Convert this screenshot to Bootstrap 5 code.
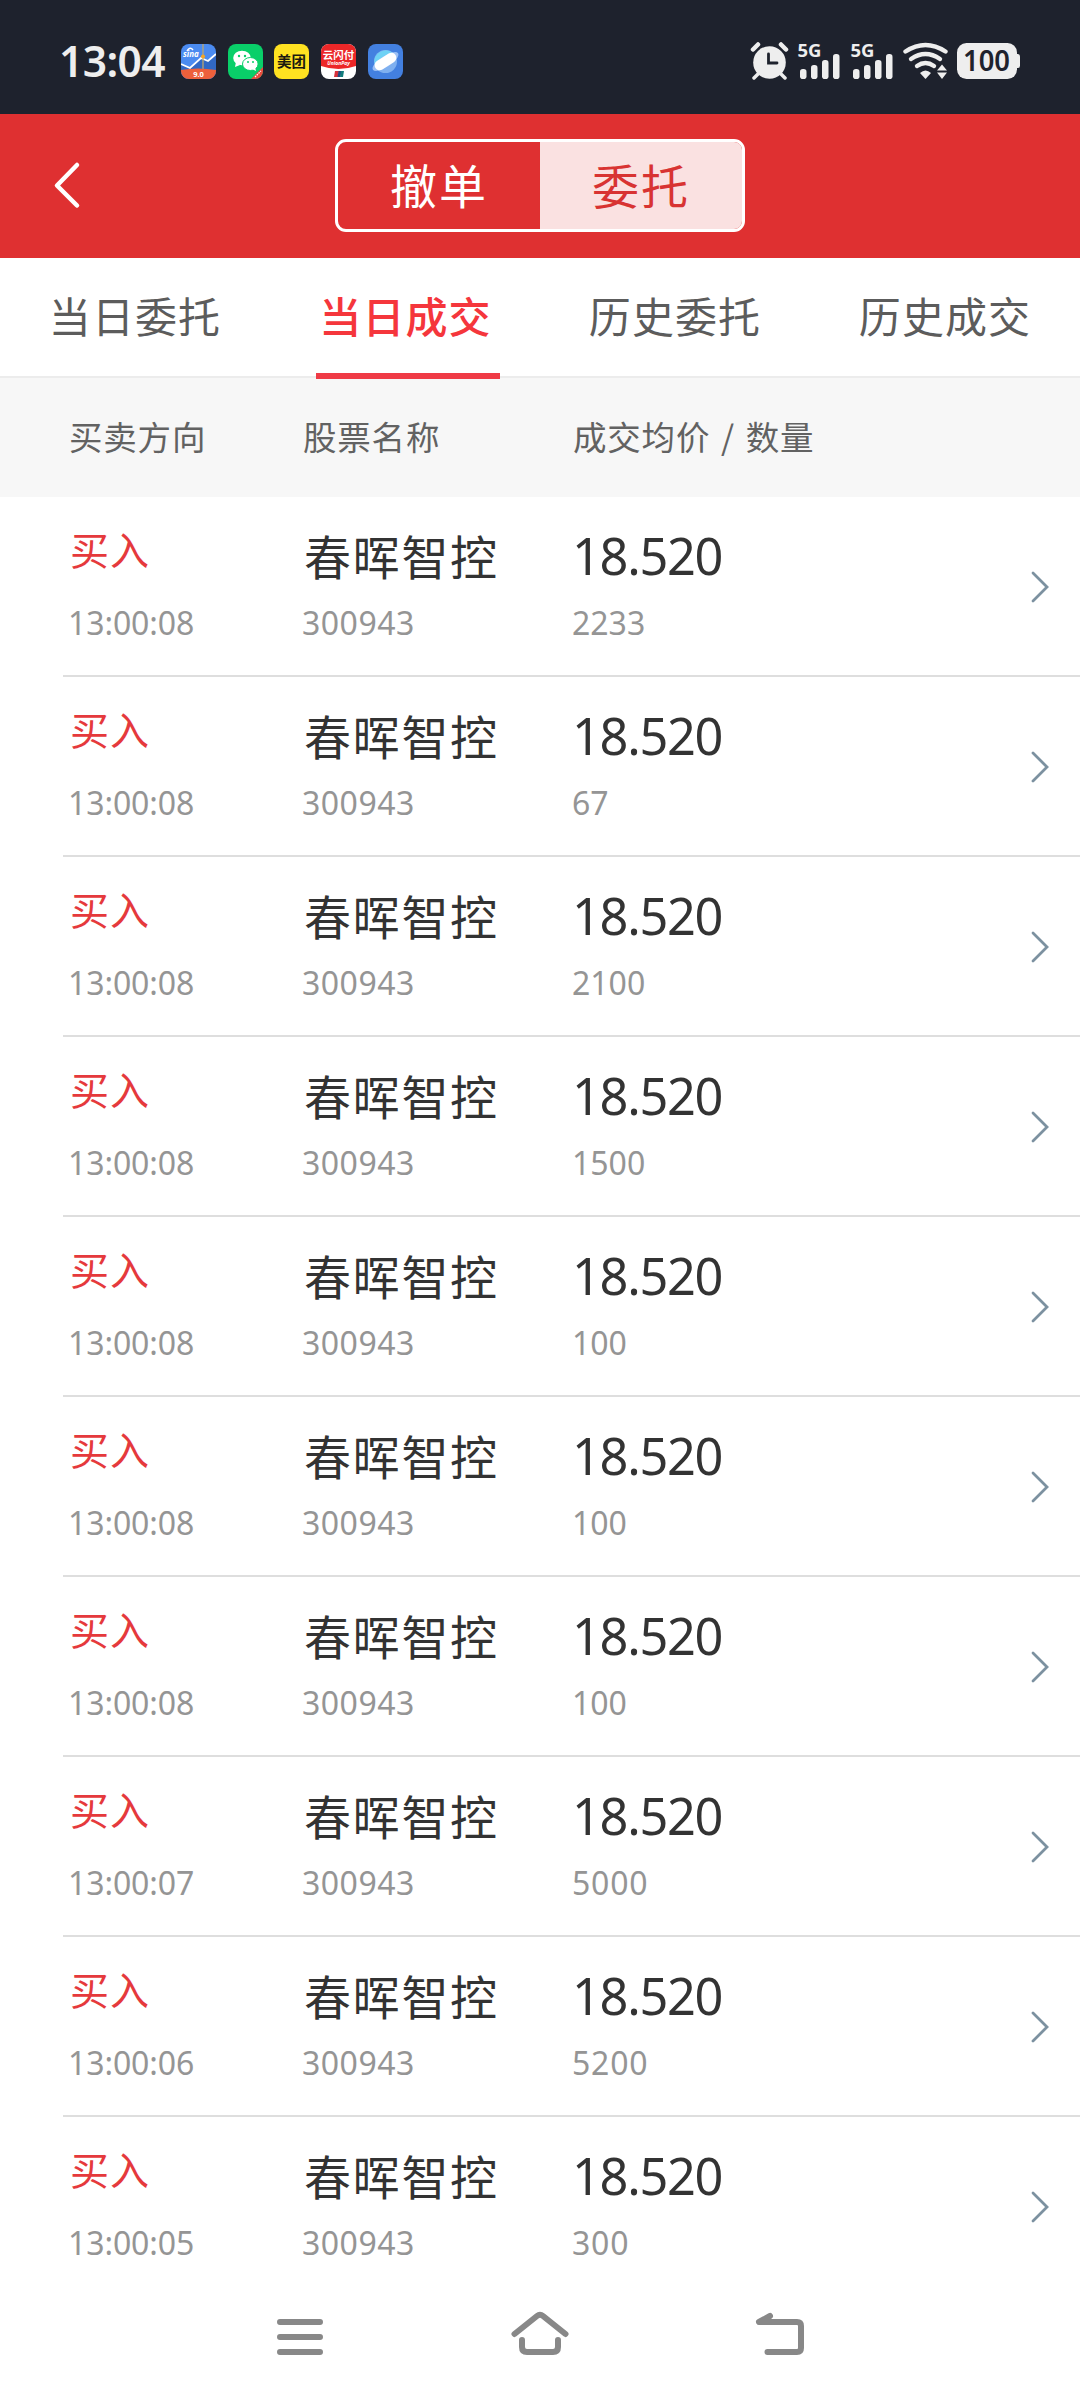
<!DOCTYPE html>
<html lang="zh-CN">
<head>
<meta charset="utf-8">
<meta name="viewport" content="width=device-width, initial-scale=1">
<title>当日成交</title>
<link href="https://cdn.jsdelivr.net/npm/bootstrap@5.3.0/dist/css/bootstrap.min.css" rel="stylesheet">
<style>
body{width:1080px;height:2400px;overflow:hidden;background:#fff;color:#333;font-family:"Noto Sans","Noto Sans CJK SC",sans-serif;line-height:1}
.cjk,.tab-item,.seg-item,.list-head,.side,.stock{font-family:"Noto Sans CJK SC",sans-serif}
svg{display:block;flex:none}
.status-bar{height:114px;background:#1e222d;padding:8px 60px 0 59px}
.clock{color:#eee;font-size:42.5px;font-weight:600;width:122px;letter-spacing:-.6px;line-height:48px}
.apps{gap:11.7px}
.title-bar{height:144px;background:#df3031}
.title-bar .back{width:335px;padding-left:52px}
.seg{width:410px;height:93px;border:3px solid #fff;border-radius:11px;overflow:hidden;margin-top:-1px}
.seg-item{width:50%;font-size:47px;letter-spacing:2px;color:#fff;padding-bottom:5px}
.seg-item.on{background:#fae1e1;color:#d83332}
.tabs-row{height:120px;border-bottom:2px solid #ececec}
.tab-item{height:121px;font-size:42px;letter-spacing:1.1px;color:#5c5c5c}
.tab-item span{height:115px;line-height:113px;display:block;width:184px;text-align:center}
.tab-item.on{color:#f5363c;font-weight:500;padding-left:5px}
.tab-item.on span{border-bottom:6px solid #ef3b46;height:121px;text-indent:-4px}
.list-head{height:119px;background:#f7f7f7;font-size:33.5px;letter-spacing:.8px;color:#626262;padding-left:69px;padding-bottom:4px}
.list-head .c1{width:234px}
.slash{margin:0 2.5px}
.c1{width:233px}.c2{width:270px}
.trade{height:180px;margin-left:63px;padding-left:7px;border-bottom:2px solid #dedede}
.trade:last-child{border-color:transparent}
.side{font-size:39px;line-height:44px;color:#e5393c;margin-top:29px;margin-bottom:31px;letter-spacing:1px}
.stock{font-size:47px;line-height:54px;margin-top:31px;margin-bottom:19px;letter-spacing:1.7px;padding-left:1px}
.price{font-size:50.5px;line-height:54px;margin-top:32px;margin-bottom:18px;letter-spacing:-1.3px;margin-left:-1px}
.sub{font-size:32px;line-height:44px;color:#959595}
.c1 .sub{letter-spacing:-.1px;margin-left:-2px}
.c2 .sub{letter-spacing:.5px;margin-left:-1px}
.qty{margin-left:-1px}
.qty.wide{letter-spacing:.8px}
.go{margin-left:auto;margin-right:30px;margin-top:2px}
.sys-nav{height:103px;padding:3px 0 0 277px}
</style>
<script src="https://cdn.jsdelivr.net/npm/bootstrap@5.3.0/dist/js/bootstrap.bundle.min.js"></script>
</head>
<body>
<header class="status-bar d-flex align-items-center">
  <div class="clock">13:04</div>
  <div class="apps d-flex">
    <svg width="35" height="35" viewBox="0 0 35 35"><defs><clipPath id="r"><rect width="35" height="35" rx="8"/></clipPath></defs><g clip-path="url(#r)"><rect width="35" height="35" fill="#4b8bf0"/><path d="M0 20L9 24 20 14 27 17 35 10V35H0Z" fill="#3168c4"/><path d="M0 20L9 24 20 14 27 17 35 10" fill="none" stroke="#fff" stroke-width="1.8"/><path d="M22 0V27" stroke="#bba66f" stroke-width="1.3"/><circle cx="22" cy="12.5" r="2" fill="#f5a623"/><path d="M0 26Q17 23 35 26V35H0Z" fill="#ed603b"/><path d="M6 7Q9 2 12 6" fill="none" stroke="#fff" stroke-width="1.5"/><text x="2" y="13" font-size="8" font-weight="bold" font-style="italic" fill="#fff">sina</text><text x="17.5" y="33.3" text-anchor="middle" font-size="7.5" font-weight="bold" fill="#fff">9.0</text></g></svg>
    <svg width="35" height="35" viewBox="0 0 35 35"><g clip-path="url(#r)"><rect width="35" height="35" fill="#09cf69"/><path d="M23 35L35 23V35Z" fill="#ea4a3d"/><ellipse cx="14" cy="14" rx="8.8" ry="7.3" fill="#fff"/><path d="M8 18l-1 5 5-2Z" fill="#fff"/><ellipse cx="22.3" cy="20" rx="7.8" ry="6.5" fill="#fff" stroke="#09cf69" stroke-width="1"/><path d="M24 25l4 2-1-4Z" fill="#fff"/><g fill="#09cf69"><circle cx="11" cy="12" r="1.2"/><circle cx="17" cy="12" r="1.2"/><circle cx="20" cy="18" r="1"/><circle cx="25" cy="18" r="1"/></g><path d="M27 33l6-6" stroke="#fff" stroke-width="1.2" stroke-dasharray="1.5 1"/></g></svg>
    <svg width="35" height="35" viewBox="0 0 35 35"><rect width="35" height="35" rx="8" fill="#ffe221"/><text class="cjk" x="17.5" y="23" text-anchor="middle" font-size="14.5" font-weight="700" fill="#1c1a10">美团</text></svg>
    <svg width="35" height="35" viewBox="0 0 35 35"><g clip-path="url(#r)"><rect width="35" height="35" fill="#fff"/><path d="M0 0H35V22Q17.500 28 0 22Z" fill="#ec2728"/><text class="cjk" x="17.500" y="14.500" text-anchor="middle" font-size="10.500" font-weight="bold" fill="#fff">云闪付</text><text x="17.500" y="21" text-anchor="middle" font-size="5" font-weight="bold" font-style="italic" fill="#fff">UnionPay</text><path d="M14 27h4l-1 6h-4Z" fill="#d8323c"/><path d="M17.500 27h3l-1 6h-3Z" fill="#234c82"/><path d="M20 27h3l-1 6h-3Z" fill="#127d7c"/></g></svg>
    <svg width="35" height="35" viewBox="0 0 35 35"><rect width="35" height="35" rx="8" fill="#4380e0"/><circle cx="17.5" cy="17.500" r="11.500" fill="#7fb0f0"/><path d="M6.500 20A11.500 11.500 0 0 1 25 9Z" fill="#6fd2f5"/><ellipse cx="17.5" cy="17.500" rx="15" ry="5.500" transform="rotate(-33 17.500 17.500)" fill="#9cc0f5"/><rect x="5.500" y="12.500" width="24" height="10" rx="5" transform="rotate(-33 17.500 17.500)" fill="#fff"/></svg>
  </div>
  <svg class="ms-auto" width="270" height="50" viewBox="750 37 270 50" fill="#eee">
    <circle cx="769.500" cy="63.500" r="16.300"/><path d="M753 50.500l5-5M786 50.500l-5-5" stroke="#eee" stroke-width="4.500" stroke-linecap="round"/><path d="M758 75l-4 4M781 75l4 4" stroke="#eee" stroke-width="3.500" stroke-linecap="round"/><path d="M768.500 55v9h8.500" fill="none" stroke="#1e222d" stroke-width="2.800" stroke-linecap="round"/>
    <g id="sig"><text x="797.500" y="58" font-size="18" font-weight="bold" textLength="24" lengthAdjust="spacingAndGlyphs">5G</text><rect x="800" y="70" width="6.500" height="10" rx="2.800"/><rect x="811" y="66" width="6.500" height="14" rx="2.800"/><rect x="822" y="61" width="6.500" height="19" rx="2.800"/><rect x="833" y="55" width="6.500" height="25" rx="2.800"/></g>
    <use href="#sig" x="53"/>
    <g fill="none" stroke="#eee" stroke-width="4.400" stroke-linecap="round"><path d="M905.500 52.500Q925.500 39.500 945.500 52.500"/><path d="M911 60Q925.500 50 940 60"/><path d="M917 67Q925.500 61 934 67"/></g><path d="M920 74q5.500-5 11 0l-5.500 6Z"/><path d="M937 71.500l5-6 5 6ZM937 73.500h10l-5 6.500Z"/>
    <rect x="957" y="44" width="60" height="36" rx="9.500"/><path d="M1015 55h3q2 0 2 2.500v9q0 2.500-2 2.500h-3Z"/><text x="986.500" y="71.800" text-anchor="middle" font-size="28" font-weight="600" fill="#1e222d" textLength="47" lengthAdjust="spacingAndGlyphs">100</text>
  </svg>
</header>
<nav class="title-bar d-flex align-items-center">
  <div class="back"><svg width="30" height="50" viewBox="0 0 30 50"><path d="M25 4L5 24.500 25 44.500" fill="none" stroke="#fff" stroke-width="4.500" stroke-linecap="round" stroke-linejoin="round"/></svg></div>
  <div class="seg d-flex"><div class="seg-item d-flex align-items-center justify-content-center">撤单</div><div class="seg-item on d-flex align-items-center justify-content-center">委托</div></div>
</nav>
<div class="tabs-row d-flex">
  <div class="tab-item col-3 d-flex justify-content-center"><span>当日委托</span></div>
  <div class="tab-item on col-3 d-flex justify-content-center"><span>当日成交</span></div>
  <div class="tab-item col-3 d-flex justify-content-center"><span>历史委托</span></div>
  <div class="tab-item col-3 d-flex justify-content-center"><span>历史成交</span></div>
</div>
<div class="list-head d-flex align-items-center"><div class="c1">买卖方向</div><div class="c2">股票名称</div><div>成交均价 <span class="slash">/</span> 数量</div></div>
<main id="trades"></main>
<footer class="sys-nav">
  <svg width="530" height="60" viewBox="277 2300 530 60" fill="none" stroke="#888" stroke-width="6" stroke-linecap="round" stroke-linejoin="round"><path d="M280 2322h40M280 2337h40M280 2352h40"/><path d="M514.500 2334L537 2316Q540 2313.500 543 2316L565.500 2334M522 2340v7q0 5 5 5h26q5 0 5-5v-7"/><path d="M770 2316l-11 6h38q4 0 4 4v22q0 4-4 4h-29.500"/></svg>
</footer>
<script>
const trades=[["13:00:08",2233],["13:00:08",67],["13:00:08",2100],["13:00:08",1500],["13:00:08",100],["13:00:08",100],["13:00:08",100],["13:00:07",5000],["13:00:06",5200],["13:00:05",300]];
document.getElementById("trades").innerHTML=trades.map(([time,qty])=>`<div class="trade d-flex"><div class="c1"><div class="side">买入</div><div class="sub">${time}</div></div><div class="c2"><div class="stock">春晖智控</div><div class="sub">300943</div></div><div><div class="price">18.520</div><div class="sub qty ${/^[35]/.test(qty)?"wide":""}">${qty}</div></div><svg class="go align-self-center" width="20" height="34" viewBox="0 0 20 34"><path d="M3 3L17 17 3 31" fill="none" stroke="#7c91a0" stroke-width="2.800" stroke-linecap="round"/></svg></div>`).join("");
</script>
</body>
</html>
